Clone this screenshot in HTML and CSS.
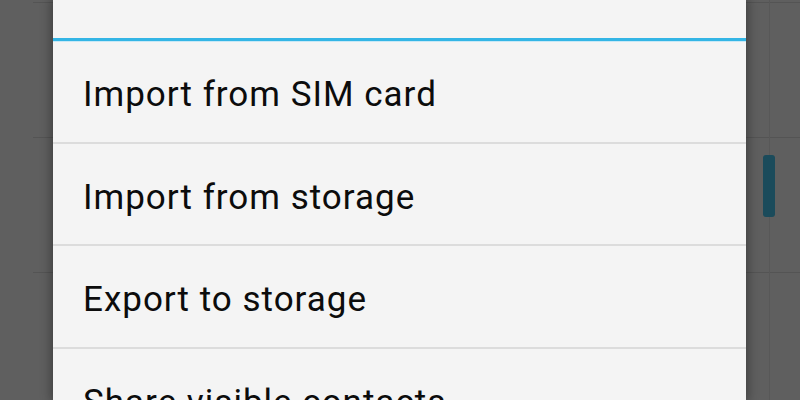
FILE: index.html
```html
<!DOCTYPE html>
<html lang="en">
<head>
    <meta charset="UTF-8">
    <title>Contacts - Import/export</title>
    <link rel="stylesheet" href="styles.css">
</head>
<body>
    <div class="screen">
        <div class="contact-list">
            <div class="contact-row"></div>
            <div class="contact-row"></div>
            <div class="contact-row"></div>
            <div class="contact-row"></div>
        </div>
        <div class="fast-track"></div>
        <div class="fast-thumb"></div>

        <div class="dialog">
            <div class="dialog-title"></div>
            <ul class="dialog-list">
                <li>Import from SIM card</li>
                <li>Import from storage</li>
                <li>Export to storage</li>
                <li>Share visible contacts</li>
            </ul>
        </div>
    </div>
</body>
</html>
```

FILE: styles.css
```css
body {
    margin: 0;
    background: #5f5f5f;
    font-family: Roboto, "Noto Sans", sans-serif;
    overflow: hidden;
}
.screen {
    position: relative;
    width: 800px;
    height: 400px;
    overflow: hidden;
}
.contact-list {
    padding-left: 33px;
    margin-top: 2px;
}
.contact-row {
    height: 134px;
    border-top: 1px solid #545454;
}
.fast-track {
    position: absolute;
    top: 0;
    bottom: 0;
    left: 769px;
    width: 1px;
    background: #585858;
}
.fast-thumb {
    position: absolute;
    top: 155px;
    left: 763px;
    width: 12px;
    height: 62px;
    border-radius: 3px;
    background: #1b4b5b;
}
.dialog {
    position: absolute;
    top: 0;
    left: 53px;
    width: 693px;
    height: 400px;
    background: #f4f4f4;
    box-shadow: 0 0 10px 2px rgba(0,0,0,0.35);
}
.dialog-title {
    height: 38px;
    border-bottom: 3px solid #33b5e5;
    box-shadow: 0 1px 0 #c8e8f5;
}
.dialog-list {
    list-style: none;
    margin: 0;
    padding: 0;
}
.dialog-list li {
    height: 100.5px;
    line-height: 107px;
    padding-left: 30px;
    font-size: 35px;
    letter-spacing: 1px;
    color: #0c0c0c;
    border-bottom: 2px solid #dcdcdc;
}
```
